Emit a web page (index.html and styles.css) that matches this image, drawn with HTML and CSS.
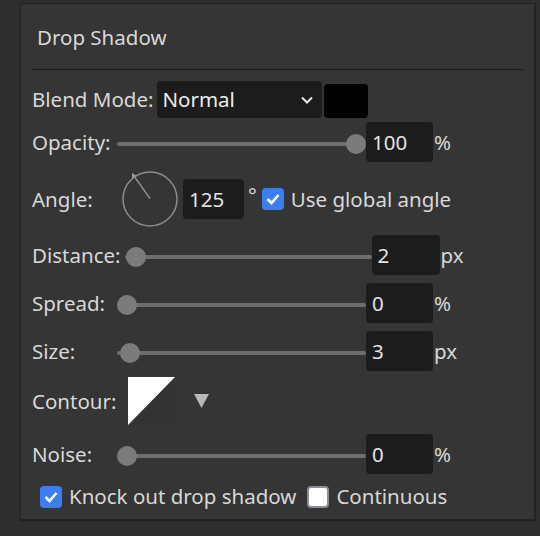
FILE: index.html
```html
<!DOCTYPE html>
<html lang="en">
<head>
    <meta charset="UTF-8">
    <title>Drop Shadow</title>
    <link rel="stylesheet" href="styles.css">
</head>
<body>
    <div class="panel">
        <div class="panel-title">Drop Shadow</div>
        <div class="sep"></div>

        <div class="row row-blend">
            <span class="label">Blend Mode:</span>
            <div class="select">
                <span>Normal</span>
                <svg class="chevron" width="12" height="8" viewBox="0 0 12 8"><path d="M1 1.5 L6 6.5 L11 1.5" fill="none" stroke="#e8e8e8" stroke-width="2"/></svg>
            </div>
            <div class="swatch"></div>
        </div>

        <div class="row row-opacity">
            <span class="label">Opacity:</span>
            <div class="slider"><div class="track"></div><div class="thumb" style="--v: 1"></div></div>
            <div class="num">100</div><span class="unit">%</span>
        </div>

        <div class="row row-angle">
            <span class="label">Angle:</span>
            <svg class="dial" width="60" height="56" viewBox="0 0 60 56">
                <circle cx="30" cy="28" r="27" fill="none" stroke="#8c8c8c" stroke-width="1.5"/>
                <line x1="30" y1="27.5" x2="14" y2="5" stroke="#8c8c8c" stroke-width="1.5"/>
                <polygon points="12,2 17,5 12,7" fill="#9a9a9a"/>
            </svg>
            <div class="num num-angle">125</div><span class="unit deg">°</span>
            <span class="check on"><svg width="14" height="12" viewBox="0 0 14 12"><path d="M1.5 6 L5.5 10 L12.5 2" fill="none" stroke="#fff" stroke-width="2.6"/></svg></span>
            <span class="check-text">Use global angle</span>
        </div>

        <div class="row row-distance">
            <span class="label">Distance:</span>
            <div class="slider"><div class="track"></div><div class="thumb" style="--v: 0.005"></div></div>
            <div class="num">2</div><span class="unit">px</span>
        </div>

        <div class="row row-spread">
            <span class="label">Spread:</span>
            <div class="slider"><div class="track"></div><div class="thumb" style="--v: 0"></div></div>
            <div class="num">0</div><span class="unit">%</span>
        </div>

        <div class="row row-size">
            <span class="label">Size:</span>
            <div class="slider"><div class="track"></div><div class="thumb" style="--v: 0.012"></div></div>
            <div class="num">3</div><span class="unit">px</span>
        </div>

        <div class="row row-contour">
            <span class="label">Contour:</span>
            <svg class="contour" width="47" height="48" viewBox="0 0 47 48"><polygon points="0,0 47,0 0,48" fill="#fff"/></svg>
            <svg class="drop" width="15" height="14" viewBox="0 0 15 14"><polygon points="0,0 15,0 7.5,14" fill="#b8b8b8"/></svg>
        </div>

        <div class="row row-noise">
            <span class="label">Noise:</span>
            <div class="slider"><div class="track"></div><div class="thumb" style="--v: 0"></div></div>
            <div class="num">0</div><span class="unit">%</span>
        </div>

        <div class="row row-checks">
            <span class="check on"><svg width="14" height="12" viewBox="0 0 14 12"><path d="M1.5 6 L5.5 10 L12.5 2" fill="none" stroke="#fff" stroke-width="2.6"/></svg></span>
            <span class="check-text">Knock out drop shadow</span>
            <span class="check off"></span>
            <span class="check-text">Continuous</span>
        </div>
    </div>
</body>
</html>
```

FILE: styles.css
```css
:root {
    --bg: #2e2e2e;
    --panel: #353535;
    --field: #1c1c1c;
    --text: #d8d8d8;
    --blue: #3a7ef2;
}

body {
    margin: 0;
    background-color: var(--bg);
    font-family: "Noto Sans", "Open Sans", sans-serif;
    font-size: 20.5px;
    line-height: 27px;
    color: var(--text);
}

.panel {
    margin: 3px 0 0 20px;
    width: 516px;
    height: 518px;
    box-sizing: border-box;
    background-color: var(--panel);
    border: 1px solid #222;
    border-right-width: 2px;
    border-bottom-width: 2px;
    padding: 0 11px;
}

.panel-title {
    padding: 20px 0 0 5px;
}

.sep {
    height: 1px;
    background-color: #1d1d1d;
    margin-top: 18px;
}

.row {
    display: flex;
    align-items: center;
}

.label {
    min-width: 85px;
    padding-right: 4px;
    box-sizing: border-box;
    white-space: nowrap;
}

/* blend mode */
.row-blend {
    margin-top: 11px;
    height: 37px;
    align-items: flex-end;
}
.row-blend .label {
    align-self: center;
}
.select {
    width: 165px;
    height: 37px;
    box-sizing: border-box;
    padding: 0 9px 0 5px;
    background-color: var(--field);
    border-radius: 4px;
    display: flex;
    align-items: center;
    justify-content: space-between;
    color: #ececec;
}
.swatch {
    width: 44px;
    height: 34px;
    margin-left: 2px;
    background-color: #000;
    border-radius: 4px;
}

/* sliders */
.slider {
    position: relative;
    width: 249px;
    height: 20px;
    margin-top: 4px;
}
.track {
    position: absolute;
    left: 0;
    right: 0;
    top: 8px;
    height: 4px;
    border-radius: 2px;
    background-color: #6e6e6e;
}
.thumb {
    position: absolute;
    top: 0;
    left: calc(var(--v) * (100% - 20px));
    width: 20px;
    height: 20px;
    border-radius: 50%;
    background-color: #7b7b7b;
}

.num {
    width: 67px;
    height: 40px;
    box-sizing: border-box;
    padding-left: 6px;
    background-color: var(--field);
    border-radius: 4px;
    display: flex;
    align-items: center;
    color: #e4e4e4;
}
.unit {
    margin-left: 1px;
}

.row-opacity { margin-top: 4px; }
.row-angle { margin-top: 9px; }
.row-distance { margin-top: 8px; }
.row-spread { margin-top: 8px; }
.row-size { margin-top: 8px; }
.row-contour { margin-top: 6px; }
.row-noise { margin-top: 9px; }
.row-checks { margin-top: 9px; padding-left: 8px; }

.row-distance .slider {
    width: 247px;
}
.row-distance .num {
    width: 68px;
}

/* angle */
.dial {
    margin-left: 3px;
}
.num-angle {
    width: 61px;
    margin-left: 3px;
}
.deg {
    margin: 11px 5px 0 4px;
    align-self: flex-start;
}

.check {
    width: 22px;
    height: 22px;
    box-sizing: border-box;
    border-radius: 4px;
    display: flex;
    align-items: center;
    justify-content: center;
}
.check.on {
    background-color: var(--blue);
}
.check.off {
    background-color: #fff;
    border: 2px solid #8d8d98;
    margin-left: 11px;
}
.check-text {
    margin-left: 7px;
}

/* contour */
.contour {
    margin-left: 8px;
    background-color: #333;
}
.drop {
    margin-left: 19px;
}
```
